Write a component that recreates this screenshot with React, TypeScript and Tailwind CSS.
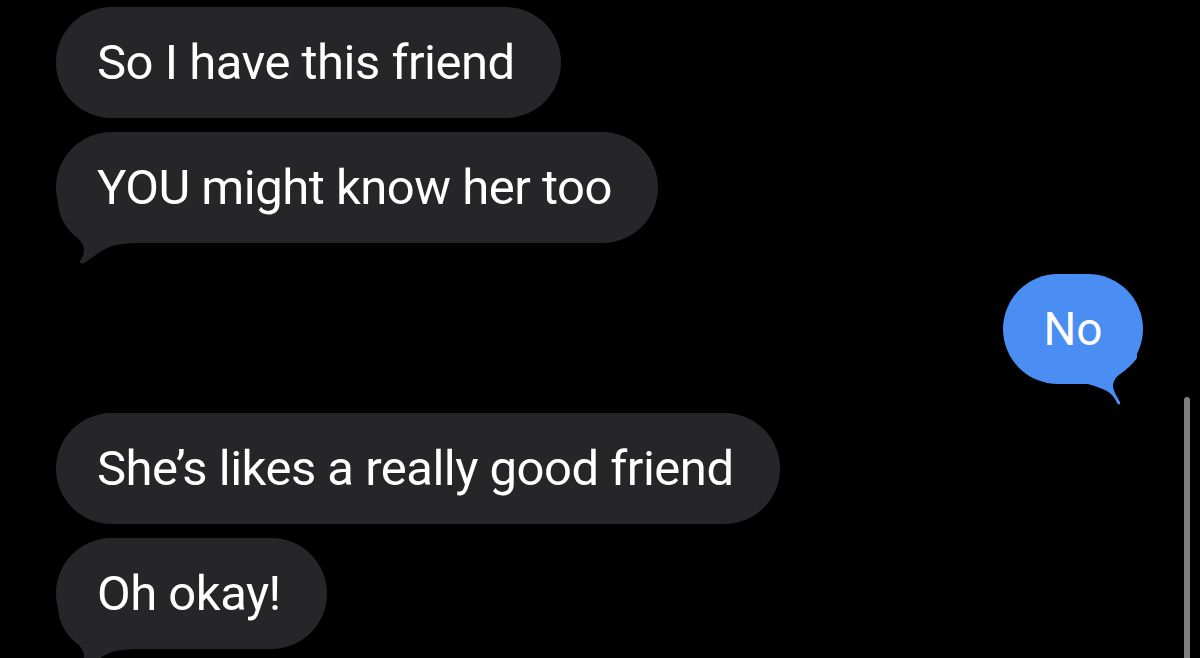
import React from "react";

const GRAY = "#262629";
const BLUE = "#4b8ef3";

function GrayTail() {
  return (
    <svg
      className="absolute left-0 top-[68px]"
      width="84"
      height="66"
      viewBox="0 0 84 66"
    >
      <path
        d="M10 0 L2 0 C2 14 8 26 18 35 C24 40 28 44 28 50 C28 55 26 58 24 61 C23 63 25 64 28 63 C36 58 45 50 56 46 C64 44 72 43 84 43 L84 0 Z"
        fill={GRAY}
      />
    </svg>
  );
}

function BlueTail() {
  return (
    <svg
      className="absolute left-[77px] top-[76px]"
      width="64"
      height="58"
      viewBox="0 0 64 58"
    >
      <path
        d="M0 0 L0 34 L8 34 C15 36 20 38 25 40 C31 43 35 48 37 53 C38 55 41 55 40 52 C37 47 34 42 33 37 C33 31 36 27 40 24 C47 19 52 15 57 8 L57 0 Z"
        fill={BLUE}
      />
    </svg>
  );
}

function Received({ text, tail, className = "" }: { text: string; tail?: boolean; className?: string }) {
  return (
    <div
      className={`relative self-start h-[111px] flex items-center rounded-[56px] bg-[#262629] pl-[41px] pr-[46px] ${className}`}
    >
      {tail && <GrayTail />}
      <span className="relative text-[49px] leading-none tracking-[-0.5px] text-white">{text}</span>
    </div>
  );
}

export default function App() {
  return (
    <div
      className="relative h-[658px] w-[1200px] overflow-hidden bg-black flex flex-col px-[56px] pt-[7px]"
      style={{ fontFamily: "Roboto, 'Liberation Sans', sans-serif" }}
    >
      <Received text="So I have this friend" />
      <Received text="YOU might know her too" tail className="mt-[14px]" />

      <div className="relative self-end mr-px mt-[31px] h-[110px] w-[140px] flex items-center justify-center rounded-[55px] bg-[#4b8ef3]">
        <BlueTail />
        <span className="relative text-[46px] leading-none text-white">No</span>
      </div>

      <Received text="She’s likes a really good friend" className="mt-[29px]" />
      <Received text="Oh okay!" tail className="mt-[14px]" />

      {/* scroll indicator */}
      <div className="absolute left-[1184px] top-[397px] h-[280px] w-[6px] rounded-full bg-[#7f7f7f]" />
    </div>
  );
}
